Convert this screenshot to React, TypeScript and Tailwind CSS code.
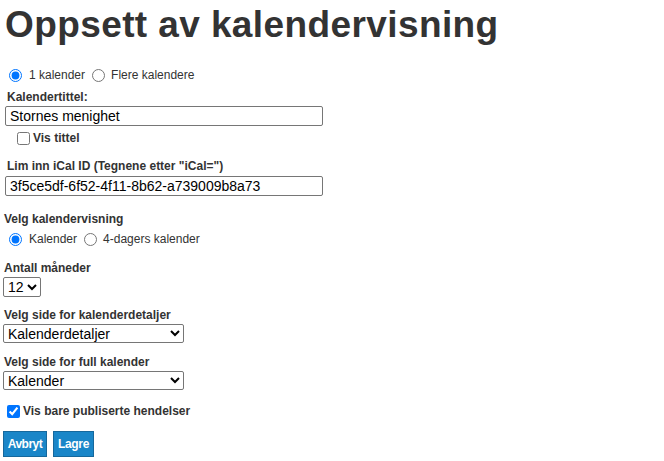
export default function App() {
  return (
    <div className="min-h-screen bg-white pl-[4px] pt-[3px] text-[#333] font-['Liberation_Sans',Arial,sans-serif]">
      <h1 className="m-0 ml-[1px] text-[37px] leading-[44px] tracking-[0.4px] font-bold text-[#333]">
        Oppsett av kalendervisning
      </h1>

      <div className="mt-[21px] ml-[4px] flex h-[14px] items-center text-[12px] leading-[14px] text-[#333]">
        <input type="radio" name="antall" defaultChecked className="m-0 ml-[1px] h-[13px] w-[13px]" />
        <span className="ml-[7px]">1 kalender</span>
        <input type="radio" name="antall" className="m-0 ml-[7px] h-[13px] w-[13px]" />
        <span className="ml-[6px]">Flere kalendere</span>
      </div>

      <div className="mt-[8px] ml-[3px] text-[12px] leading-[14px] font-bold text-[#333]">Kalendertittel:</div>
      <input
        type="text"
        defaultValue="Stornes menighet"
        className="mt-[2px] ml-[1px] block h-[20px] w-[318px] rounded-[2px] border border-[#767676] px-[4px] text-[14px] text-black"
      />
      <label className="mt-[5px] ml-[13px] flex h-[14px] items-center text-[12px] leading-[14px] font-bold text-[#333]">
        <input type="checkbox" className="m-0 h-[13px] w-[13px]" />
        <span className="ml-[3px]">Vis tittel</span>
      </label>

      <div className="mt-[14px] ml-[3px] text-[12px] leading-[14px] font-bold text-[#333]">
        Lim inn iCal ID (Tegnene etter "iCal=")
      </div>
      <input
        type="text"
        defaultValue="3f5ce5df-6f52-4f11-8b62-a739009b8a73"
        className="mt-[3px] ml-[1px] block h-[20px] w-[318px] rounded-[2px] border border-[#767676] px-[4px] text-[14px] text-black"
      />

      <div className="mt-[16px] text-[12px] leading-[14px] font-bold text-[#333]">Velg kalendervisning</div>
      <div className="mt-[6px] ml-[4px] flex h-[14px] items-center text-[12px] leading-[14px] text-[#333]">
        <input type="radio" name="visning" defaultChecked className="m-0 ml-[1px] h-[13px] w-[13px]" />
        <span className="ml-[7px]">Kalender</span>
        <input type="radio" name="visning" className="m-0 ml-[7px] h-[13px] w-[13px]" />
        <span className="ml-[6px]">4-dagers kalender</span>
      </div>

      <div className="mt-[15px] text-[12px] leading-[14px] font-bold text-[#333]">Antall måneder</div>
      <select
        defaultValue="12"
        className="mt-[2px] ml-[-1px] block h-[20px] w-[38px] rounded-[2px] border border-[#767676] bg-white text-[14px] text-black"
      >
        {Array.from({ length: 12 }, (_, i) => (
          <option key={i} value={String(i + 1)}>
            {i + 1}
          </option>
        ))}
      </select>

      <div className="mt-[11px] text-[12px] leading-[14px] font-bold text-[#333]">Velg side for kalenderdetaljer</div>
      <select className="mt-[2px] ml-[-1px] block h-[19px] w-[181px] rounded-[2px] border border-[#767676] bg-white text-[14px] text-black">
        <option>Kalenderdetaljer</option>
      </select>

      <div className="mt-[12px] text-[12px] leading-[14px] font-bold text-[#333]">Velg side for full kalender</div>
      <select className="mt-[2px] ml-[-1px] block h-[19px] w-[181px] rounded-[2px] border border-[#767676] bg-white text-[14px] text-black">
        <option>Kalender</option>
      </select>

      <label className="mt-[14px] ml-[3px] flex h-[14px] items-center text-[12px] leading-[14px] font-bold text-[#333]">
        <input type="checkbox" defaultChecked className="m-0 h-[13px] w-[13px]" />
        <span className="ml-[3px]">Vis bare publiserte hendelser</span>
      </label>

      <div className="mt-[13px] ml-[-1px] flex gap-[6px]">
        <button className="h-[26px] w-[44px] border border-[#16689c] bg-[#1a86c8] text-[12px] font-bold tracking-[-0.5px] text-white">
          Avbryt
        </button>
        <button className="h-[26px] w-[41px] border border-[#16689c] bg-[#1a86c8] text-[12px] font-bold tracking-[-0.3px] text-white">
          Lagre
        </button>
      </div>
    </div>
  );
}
